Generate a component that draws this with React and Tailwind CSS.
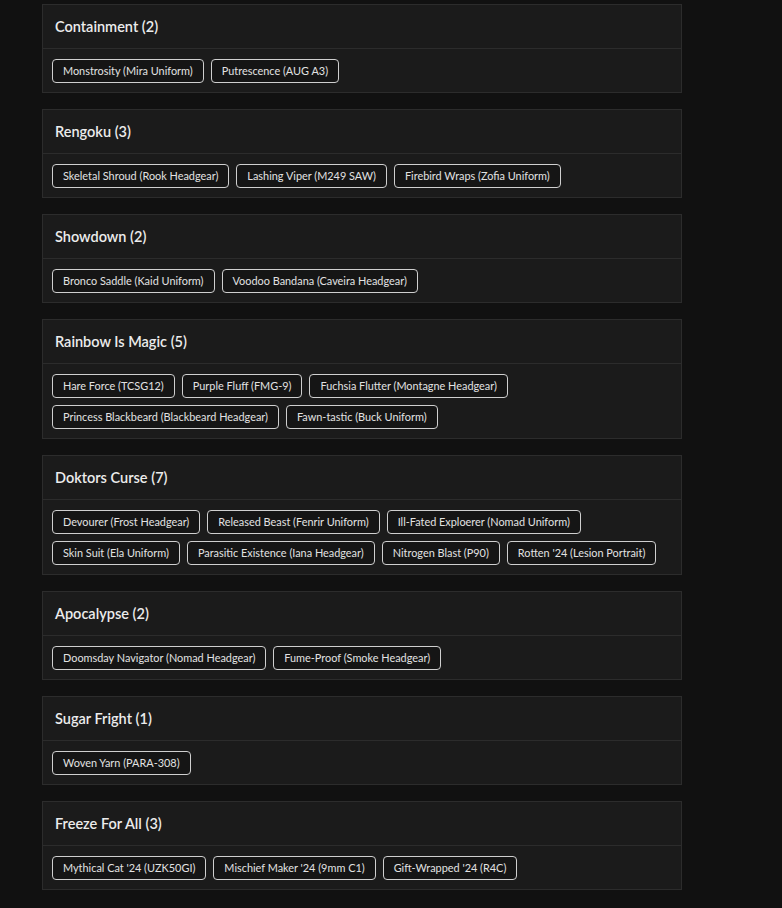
const SETS = [
  { name: 'Containment', items: ['Monstrosity (Mira Uniform)', 'Putrescence (AUG A3)'] },
  { name: 'Rengoku', items: ['Skeletal Shroud (Rook Headgear)', 'Lashing Viper (M249 SAW)', 'Firebird Wraps (Zofia Uniform)'] },
  { name: 'Showdown', items: ['Bronco Saddle (Kaid Uniform)', 'Voodoo Bandana (Caveira Headgear)'] },
  {
    name: 'Rainbow Is Magic',
    items: [
      'Hare Force (TCSG12)',
      'Purple Fluff (FMG-9)',
      'Fuchsia Flutter (Montagne Headgear)',
      'Princess Blackbeard (Blackbeard Headgear)',
      'Fawn-tastic (Buck Uniform)',
    ],
  },
  {
    name: 'Doktors Curse',
    items: [
      'Devourer (Frost Headgear)',
      'Released Beast (Fenrir Uniform)',
      'Ill-Fated Exploerer (Nomad Uniform)',
      'Skin Suit (Ela Uniform)',
      'Parasitic Existence (Iana Headgear)',
      'Nitrogen Blast (P90)',
      "Rotten '24 (Lesion Portrait)",
    ],
  },
  { name: 'Apocalypse', items: ['Doomsday Navigator (Nomad Headgear)', 'Fume-Proof (Smoke Headgear)'] },
  { name: 'Sugar Fright', items: ['Woven Yarn (PARA-308)'] },
  { name: 'Freeze For All', items: ["Mythical Cat '24 (UZK50GI)", "Mischief Maker '24 (9mm C1)", "Gift-Wrapped '24 (R4C)"] },
];

function SetCard({ set }) {
  return (
    <section className="border border-[#2c2c2c] bg-[#1b1b1b]">
      <div className="h-[44px] flex items-center px-[12px] border-b border-[#2c2c2c]">
        <h2 className="text-[14.5px] font-semibold text-[#ececec]">
          {set.name} ({set.items.length})
        </h2>
      </div>
      <div className="flex flex-wrap gap-x-[7px] gap-y-[7px] pt-[10px] pb-[9px] px-[9px]">
        {set.items.map((item) => (
          <span
            key={item}
            className="h-[24px] flex items-center px-[10px] rounded-[4px] border border-[#cfcfcf] bg-[#151515] text-[10.9px] text-[#e2e2e2] whitespace-nowrap"
          >
            {item}
          </span>
        ))}
      </div>
    </section>
  );
}

export default function App() {
  return (
    <div
      className="min-h-screen bg-[#111111] pt-[4px] pb-[16px]"
      style={{ fontFamily: 'Lato, "Open Sans", sans-serif' }}
    >
      <div className="ml-[42px] w-[640px] flex flex-col gap-[16px]">
        {SETS.map((set) => (
          <SetCard key={set.name} set={set} />
        ))}
      </div>
    </div>
  );
}
